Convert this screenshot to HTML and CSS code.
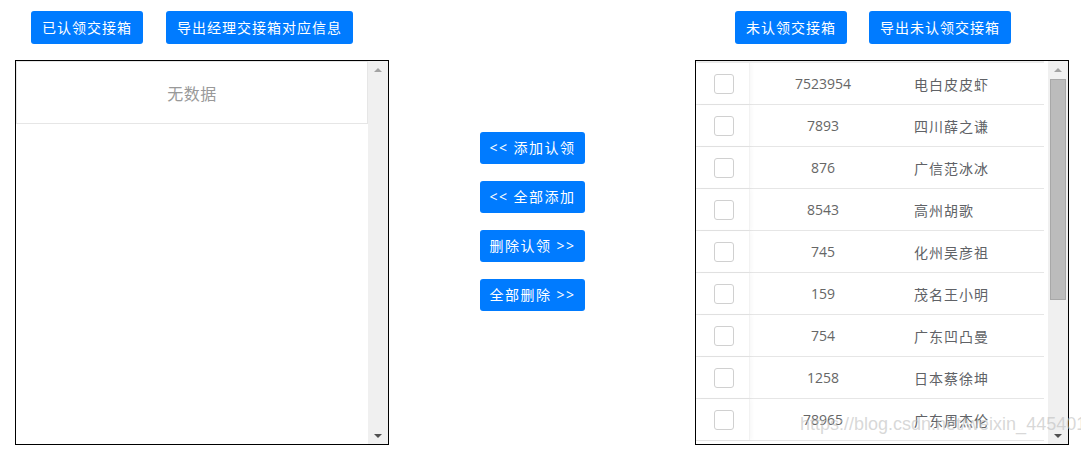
FILE: index.html
```html
<!DOCTYPE html>
<html lang="zh">
<head>
<meta charset="utf-8">
<title>交接箱认领</title>
<link rel="stylesheet" href="styles.css">
</head>
<body>
<div class="page">
  <div class="col col-left">
    <div class="toolbar toolbar-left">
      <button class="btn">已认领交接箱</button>
      <button class="btn">导出经理交接箱对应信息</button>
    </div>
    <div class="panel">
      <div class="panel-body">
        <div class="empty-cell">无数据</div>
      </div>
      <div class="scrollbar">
        <div class="sb-btn"><span class="tri-up"></span></div>
        <div class="sb-track"></div>
        <div class="sb-btn"><span class="tri-down"></span></div>
      </div>
    </div>
  </div>

  <div class="col col-mid">
    <button class="btn btn-mid">&lt;&lt; 添加认领</button>
    <button class="btn btn-mid">&lt;&lt; 全部添加</button>
    <button class="btn btn-mid">删除认领 &gt;&gt;</button>
    <button class="btn btn-mid">全部删除 &gt;&gt;</button>
  </div>

  <div class="col col-right">
    <div class="toolbar toolbar-right">
      <button class="btn">未认领交接箱</button>
      <button class="btn">导出未认领交接箱</button>
    </div>
    <div class="panel">
      <div class="panel-body">
        <div class="table">
          <div class="row"><div class="c-check"><span class="checkbox"></span></div><div class="c-num">7523954</div><div class="c-name">电白皮皮虾</div></div>
          <div class="row"><div class="c-check"><span class="checkbox"></span></div><div class="c-num">7893</div><div class="c-name">四川薛之谦</div></div>
          <div class="row"><div class="c-check"><span class="checkbox"></span></div><div class="c-num">876</div><div class="c-name">广信范冰冰</div></div>
          <div class="row"><div class="c-check"><span class="checkbox"></span></div><div class="c-num">8543</div><div class="c-name">高州胡歌</div></div>
          <div class="row"><div class="c-check"><span class="checkbox"></span></div><div class="c-num">745</div><div class="c-name">化州吴彦祖</div></div>
          <div class="row"><div class="c-check"><span class="checkbox"></span></div><div class="c-num">159</div><div class="c-name">茂名王小明</div></div>
          <div class="row"><div class="c-check"><span class="checkbox"></span></div><div class="c-num">754</div><div class="c-name">广东凹凸曼</div></div>
          <div class="row"><div class="c-check"><span class="checkbox"></span></div><div class="c-num">1258</div><div class="c-name">日本蔡徐坤</div></div>
          <div class="row"><div class="c-check"><span class="checkbox"></span></div><div class="c-num">78965</div><div class="c-name">广东周杰伦</div></div>
        </div>
      </div>
      <div class="scrollbar">
        <div class="sb-btn"><span class="tri-up"></span></div>
        <div class="sb-track"><div class="sb-thumb"></div></div>
        <div class="sb-btn"><span class="tri-down"></span></div>
      </div>
    </div>
  </div>

  <div class="watermark">https://blog.csdn.net/weixin_44540198</div>
</div>
</body>
</html>
```

FILE: styles.css
```css
* { box-sizing: border-box; }

html, body {
  margin: 0;
  padding: 0;
  background: #fff;
}

body {
  font-family: "Open Sans", "Noto Sans CJK SC", sans-serif;
  font-size: 14px;
  color: #606266;
  overflow: hidden;
}

.page {
  position: relative;
  display: flex;
  align-items: flex-start;
  padding: 11px 0 0 15px;
  width: 1081px;
  height: 449px;
}

.col-left, .col-right {
  width: 374px;
  display: flex;
  flex-direction: column;
}

.col-mid {
  width: 105px;
  margin-left: 91px;
  padding-top: 121px;
  display: flex;
  flex-direction: column;
  gap: 17px;
}

.col-right {
  margin-left: 110px;
}

.toolbar {
  display: flex;
  height: 33px;
  margin-bottom: 16px;
}

.toolbar-left { padding-left: 16px; gap: 23px; }
.toolbar-right { padding-left: 40px; gap: 22px; }

.btn {
  font-family: "Open Sans", "Noto Sans CJK SC", sans-serif;
  font-size: 14px;
  letter-spacing: 1px;
  color: #fff;
  background: #007bff;
  border: none;
  border-radius: 3px;
  height: 33px;
  padding: 0 11px;
  line-height: 33px;
  white-space: nowrap;
  cursor: pointer;
}

.btn-mid {
  width: 105px;
  height: 32px;
  line-height: 32px;
  padding: 0;
  text-align: center;
  letter-spacing: 1.5px;
}

.panel {
  display: flex;
  width: 374px;
  height: 385px;
  border: 1px solid #000;
  background: #fff;
}

.panel-body {
  flex: 1;
  overflow: hidden;
}

.empty-cell {
  height: 63px;
  border: 1px solid #e6e6e6;
  display: flex;
  align-items: center;
  justify-content: center;
  font-size: 16px;
  color: #999;
  letter-spacing: 0.5px;
}

.scrollbar {
  width: 20px;
  background: #f0f0f0;
  display: flex;
  flex-direction: column;
}

.sb-btn {
  height: 17px;
  display: flex;
  align-items: center;
  justify-content: center;
}

.tri-up {
  width: 0;
  height: 0;
  border-left: 4px solid transparent;
  border-right: 4px solid transparent;
  border-bottom: 4px solid #a3a3a3;
}

.tri-down {
  width: 0;
  height: 0;
  border-left: 4px solid transparent;
  border-right: 4px solid transparent;
  border-top: 4px solid #505050;
}

.sb-track {
  flex: 1;
  padding: 1px 2px 0 2px;
}

.sb-thumb {
  height: 221px;
  background: #bcbcbc;
  border: 1px solid #a8a8a8;
}

.table {
  width: 348px;
  border-top: 2px solid #ececec;
}

.row {
  display: flex;
  height: 42px;
  border-bottom: 1px solid #e6e6e6;
}

.c-check {
  width: 54px;
  flex: none;
  display: flex;
  align-items: center;
  padding-left: 18px;
  border-right: 1px solid #f2f2f2;
  box-shadow: 2px 0 4px rgba(0, 0, 0, 0.03);
}

.checkbox {
  width: 20px;
  height: 20px;
  border: 1px solid #d0d0d0;
  border-radius: 3px;
  background: #fff;
}

.c-num {
  width: 146px;
  flex: none;
  display: flex;
  align-items: center;
  justify-content: center;
  font-size: 14px;
  color: #666;
}

.c-name {
  flex: 1;
  display: flex;
  align-items: center;
  padding-left: 18px;
  letter-spacing: 1px;
  color: #606266;
}

.watermark {
  position: absolute;
  left: 800px;
  top: 414px;
  font-family: "Liberation Sans", Arial, sans-serif;
  font-size: 18px;
  color: rgba(190, 190, 190, 0.6);
  white-space: nowrap;
  pointer-events: none;
}
```
